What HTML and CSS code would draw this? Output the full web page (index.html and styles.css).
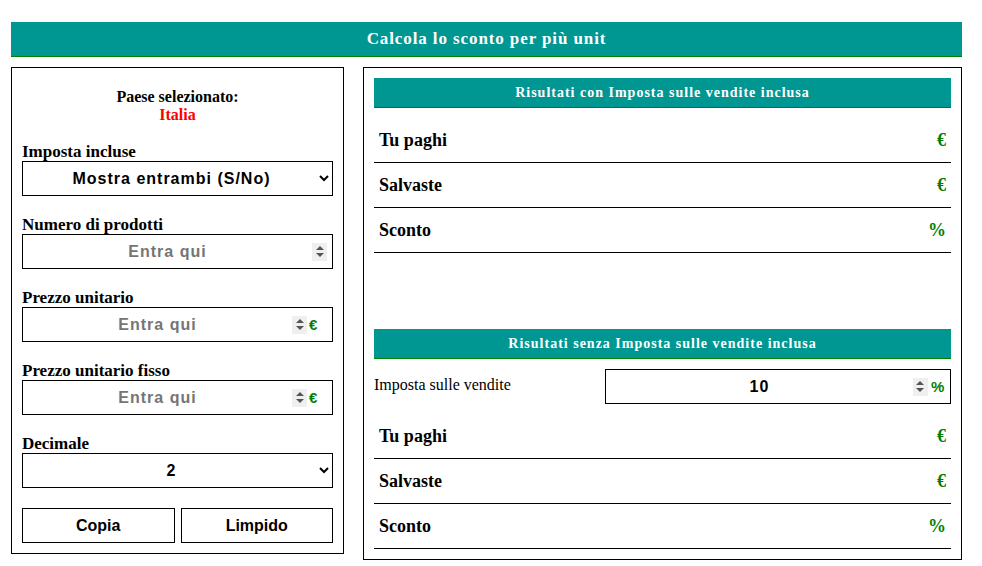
FILE: index.html
```html
<!DOCTYPE html>
<html lang="it">
<head>
<meta charset="utf-8">
<title>Calcola lo sconto per più unit</title>
<link rel="stylesheet" href="styles.css">
</head>
<body>
<div class="page">
  <div class="topbar">Calcola lo sconto per più unit</div>
  <div class="main">
    <div class="left">
      <div class="country">Paese selezionato:<br><span class="red">Italia</span></div>
      <div class="group first">
        <label class="label">Imposta incluse</label>
        <select class="sel"><option>Mostra entrambi (S/No)</option></select>
      </div>
      <div class="group">
        <label class="label">Numero di prodotti</label>
        <div class="field">
          <input class="inp" type="text" placeholder="Entra qui">
          <span class="spin"><i class="up"></i><i class="down"></i></span>
        </div>
      </div>
      <div class="group">
        <label class="label">Prezzo unitario</label>
        <div class="field unitfield">
          <input class="inp" type="text" placeholder="Entra qui">
          <span class="spin"><i class="up"></i><i class="down"></i></span>
          <span class="unit">€</span>
        </div>
      </div>
      <div class="group">
        <label class="label">Prezzo unitario fisso</label>
        <div class="field unitfield">
          <input class="inp" type="text" placeholder="Entra qui">
          <span class="spin"><i class="up"></i><i class="down"></i></span>
          <span class="unit">€</span>
        </div>
      </div>
      <div class="group">
        <label class="label">Decimale</label>
        <select class="sel"><option>2</option></select>
      </div>
      <div class="buttons">
        <button class="btn">Copia</button>
        <button class="btn">Limpido</button>
      </div>
    </div>
    <div class="right">
      <div class="head">Risultati con Imposta sulle vendite inclusa</div>
      <div class="rows">
        <div class="row"><span>Tu paghi</span><span class="val">€</span></div>
        <div class="row"><span>Salvaste</span><span class="val">€</span></div>
        <div class="row"><span>Sconto</span><span class="val">%</span></div>
      </div>
      <div class="head second">Risultati senza Imposta sulle vendite inclusa</div>
      <div class="taxrow">
        <span class="taxlabel">Imposta sulle vendite</span>
        <div class="field taxfield">
          <input class="inp val10" type="text" value="10">
          <span class="spin"><i class="up"></i><i class="down"></i></span>
          <span class="unit pct">%</span>
        </div>
      </div>
      <div class="rows">
        <div class="row"><span>Tu paghi</span><span class="val">€</span></div>
        <div class="row"><span>Salvaste</span><span class="val">€</span></div>
        <div class="row"><span>Sconto</span><span class="val">%</span></div>
      </div>
    </div>
  </div>
</div>
</body>
</html>
```

FILE: styles.css
```css
* { box-sizing: border-box; }
body {
  margin: 0;
  background: #fff;
  font-family: "Liberation Serif", "Times New Roman", serif;
  color: #000;
}
.page {
  width: 951px;
  margin: 22px 0 0 11px;
}
.topbar {
  height: 35px;
  background: #009692;
  border-bottom: 1px solid #008000;
  color: #fff;
  font-weight: bold;
  font-size: 17px;
  letter-spacing: 0.9px;
  display: flex;
  align-items: center;
  justify-content: center;
}
.main {
  display: flex;
  align-items: flex-start;
  gap: 19px;
  margin-top: 10px;
}
.left {
  width: 333px;
  border: 1px solid #000;
  padding: 10px;
}
.country {
  margin-top: 10px;
  text-align: center;
  font-weight: bold;
  font-size: 16px;
  line-height: 18px;
}
.red { color: #f00; }
.group { margin-top: 20px; }
.group.first { margin-top: 19px; }
.label {
  display: block;
  font-weight: bold;
  font-size: 17px;
  line-height: 18px;
}
.sel {
  display: block;
  width: 100%;
  height: 35px;
  border: 1px solid #000;
  border-radius: 0;
  background: #fff;
  color: #000;
  font-family: "Liberation Sans", Arial, sans-serif;
  font-weight: bold;
  font-size: 16px;
  letter-spacing: 1px;
  text-align: center;
  text-align-last: center;
  outline: none;
}
.field {
  display: flex;
  align-items: center;
  height: 35px;
  border: 1px solid #000;
  padding-right: 5px;
  background: #fff;
}
.unitfield { padding-right: 0; }
.inp {
  flex: 1;
  min-width: 0;
  height: 100%;
  border: 0;
  outline: none;
  background: transparent;
  text-align: center;
  font-family: "Liberation Sans", Arial, sans-serif;
  font-weight: bold;
  font-size: 16px;
  letter-spacing: 1px;
  color: #000;
  padding: 0 2px;
}
.inp::placeholder { color: #757575; opacity: 1; }
.spin {
  width: 15px;
  height: 18px;
  background: #efefef;
  display: flex;
  flex-direction: column;
  align-items: center;
  justify-content: center;
  gap: 3px;
}
.spin i { display: block; width: 0; height: 0; }
.spin .up {
  border-left: 4px solid transparent;
  border-right: 4px solid transparent;
  border-bottom: 4px solid #545454;
}
.spin .down {
  border-left: 4px solid transparent;
  border-right: 4px solid transparent;
  border-top: 4px solid #545454;
}
.unit {
  width: 25px;
  padding-left: 2px;
  color: #008000;
  font-family: "Liberation Sans", Arial, sans-serif;
  font-weight: bold;
  font-size: 15px;
}
.buttons {
  display: flex;
  gap: 6px;
  margin-top: 20px;
}
.btn {
  flex: 1;
  height: 35px;
  border: 1px solid #000;
  background: #fff;
  font-family: "Liberation Sans", Arial, sans-serif;
  font-weight: bold;
  font-size: 16px;
  color: #000;
  padding: 0;
}
.right {
  flex: 1;
  border: 1px solid #000;
  padding: 10px;
}
.head {
  height: 30px;
  background: #009692;
  border-bottom: 1px solid #008000;
  color: #fff;
  font-weight: bold;
  font-size: 14px;
  letter-spacing: 1px;
  display: flex;
  align-items: center;
  justify-content: center;
}
.head.second { margin-top: 76px; }
.rows { margin-top: 10px; }
.row {
  height: 45px;
  border-bottom: 1px solid #000;
  padding: 0 5px;
  display: flex;
  align-items: center;
  justify-content: space-between;
  font-weight: bold;
  font-size: 18px;
}
.val { color: #008000; }
.taxrow {
  display: flex;
  align-items: center;
  margin-top: 10px;
}
.taxlabel {
  width: 40%;
  font-size: 16px;
  margin-top: -4px;
}
.taxfield {
  width: 60%;
  height: 35px;
  padding-right: 0;
}
.pct { width: 22px; font-size: 15px; padding-left: 3px; }
```
